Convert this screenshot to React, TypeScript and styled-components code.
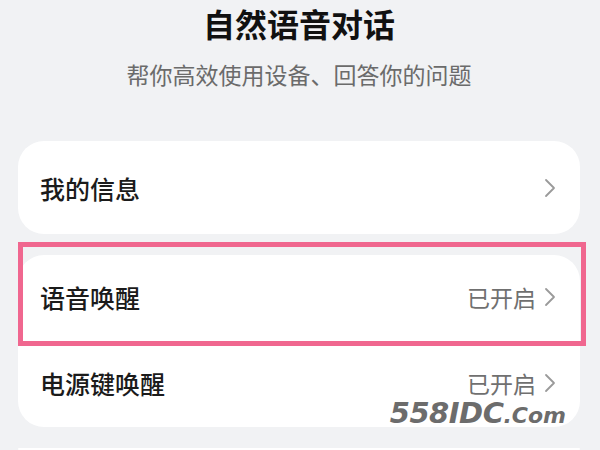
import React from 'react';
import styled, { createGlobalStyle } from 'styled-components';

const GlobalStyle = createGlobalStyle`
  html, body {
    margin: 0;
    padding: 0;
    overflow: hidden;
    background: #f1f2f4;
  }
  body {
    font-family: "Noto Sans CJK SC", "Noto Sans", sans-serif;
  }
`;

const Page = styled.div`
  width: 600px;
  height: 450px;
  overflow: hidden;
  box-sizing: border-box;
  padding: 0 20px 0 18px;
  display: flex;
  flex-direction: column;
`;

const Header = styled.header`
  display: flex;
  flex-direction: column;
  align-items: center;
`;

const Title = styled.h1`
  margin: 0;
  font-size: 32px;
  line-height: 46px;
  font-weight: 700;
  color: #111111;
`;

const Subtitle = styled.p`
  margin: 13px 0 0;
  font-size: 23px;
  line-height: 30px;
  font-weight: 400;
  color: #6b6b6b;
`;

const Card = styled.section<{ $gap: number }>`
  position: relative;
  flex-shrink: 0;
  margin-top: ${p => p.$gap}px;
  background: #ffffff;
  border-radius: 26px;
  display: flex;
  flex-direction: column;
`;

const Row = styled.div<{ $height: number }>`
  position: relative;
  height: ${p => p.$height}px;
  display: flex;
  align-items: center;
  justify-content: space-between;
  padding: 0 24px 0 22px;
`;

const Label = styled.span`
  font-size: 25px;
  font-weight: 500;
  color: #1b1b1b;
`;

const Trailing = styled.div`
  display: flex;
  align-items: center;
  gap: 8px;
`;

const Value = styled.span`
  font-size: 23px;
  color: #707070;
`;

const Highlight = styled.div`
  position: absolute;
  top: -13px;
  bottom: -7px;
  left: 0;
  right: -6px;
  border: 5px solid #f0678f;
  pointer-events: none;
`;

const Watermark = styled.div`
  position: absolute;
  right: 14px;
  bottom: -4px;
  font-family: "DejaVu Sans", sans-serif;
  font-style: italic;
  font-weight: 700;
  color: #6c6c6c;
  font-size: 29px;
  line-height: 30px;
  letter-spacing: -0.5px;

  small {
    font-size: 22px;
    letter-spacing: 0;
  }
`;

const Chevron = () => (
  <svg width="12" height="20" viewBox="0 0 12 20">
    <path d="M2 2 L10 10 L2 18" fill="none" stroke="#9a9a9a" strokeWidth="1.8" strokeLinecap="round" strokeLinejoin="round" />
  </svg>
);

const App: React.FC = () => {
  return (
    <>
      <GlobalStyle />
      <Page>
        <Header>
          <Title>自然语音对话</Title>
          <Subtitle>帮你高效使用设备、回答你的问题</Subtitle>
        </Header>

        <Card $gap={52}>
          <Row $height={93}>
            <Label>我的信息</Label>
            <Chevron />
          </Row>
        </Card>

        <Card $gap={21}>
          <Row $height={84}>
            <Label>语音唤醒</Label>
            <Trailing>
              <Value>已开启</Value>
              <Chevron />
            </Trailing>
            <Highlight />
          </Row>
          <Row $height={88}>
            <Label>电源键唤醒</Label>
            <Trailing>
              <Value>已开启</Value>
              <Chevron />
            </Trailing>
          </Row>
          <Watermark>
            558IDC<small>.Com</small>
          </Watermark>
        </Card>

        <Card $gap={21}>
          <Row $height={2} />
        </Card>
      </Page>
    </>
  );
};

export default App;
